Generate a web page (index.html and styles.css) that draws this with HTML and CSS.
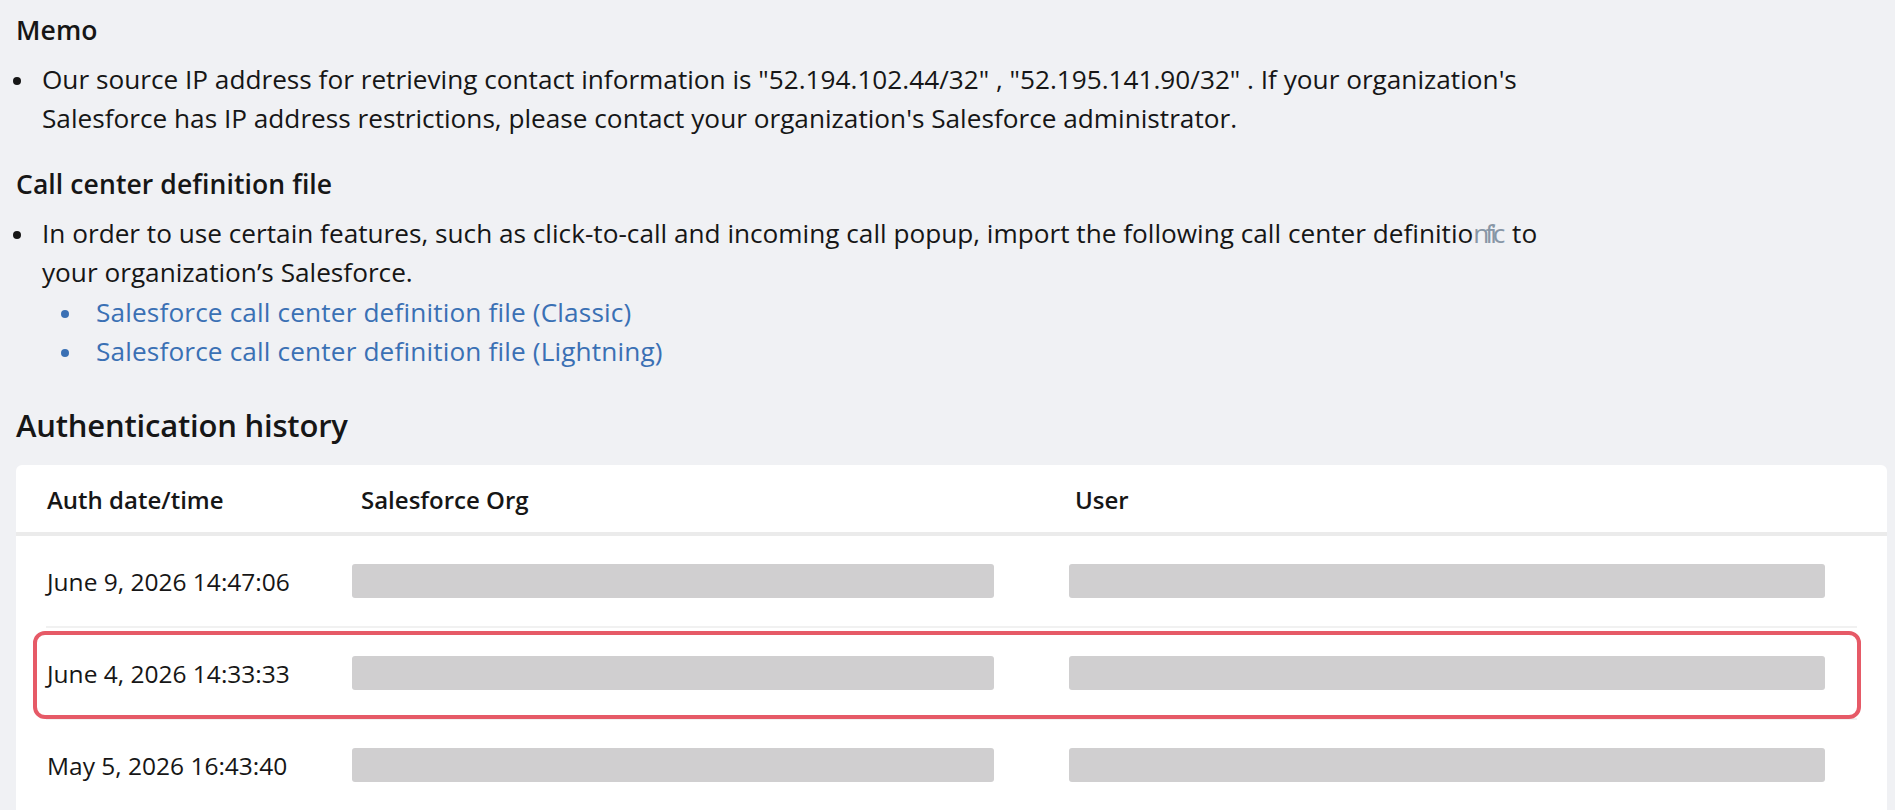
FILE: index.html
```html
<!DOCTYPE html>
<html lang="en">
<head>
<meta charset="UTF-8" />
<meta name="viewport" content="width=device-width, initial-scale=1" />
<title>Salesforce integration</title>
<link rel="stylesheet" href="styles.css">
</head>
<body>
  <main class="page">
    <h2 class="note-title">Memo</h2>
    <ul class="note-list">
      <li>Our source IP address for retrieving contact information is "52.194.102.44/32" , "52.195.141.90/32" . If your organization's<br>Salesforce has IP address restrictions, please contact your organization's Salesforce administrator.</li>
    </ul>

    <h2 class="note-title">Call center definition file</h2>
    <ul class="note-list">
      <li>In order to use certain features, such as click-to-call and incoming call popup, import the following call center definitio<span class="ghost">nfic</span> to<br>your organization’s Salesforce.
        <ul class="link-list">
          <li><a href="#">Salesforce call center definition file (Classic)</a></li>
          <li><a href="#">Salesforce call center definition file (Lightning)</a></li>
        </ul>
      </li>
    </ul>

    <h1 class="section-title">Authentication history</h1>
    <div class="card">
      <div class="table-head">
        <div class="cols">
          <div>Auth date/time</div>
          <div>Salesforce Org</div>
          <div>User</div>
        </div>
      </div>
      <div class="table-body">
        <div class="cols row">
          <div>June 9, 2026 14:47:06</div>
          <div><span class="mask mask-org"></span></div>
          <div><span class="mask mask-user"></span></div>
        </div>
        <div class="cols row marked">
          <div>June 4, 2026 14:33:33</div>
          <div><span class="mask mask-org"></span></div>
          <div><span class="mask mask-user"></span></div>
        </div>
        <div class="cols row">
          <div>May 5, 2026 16:43:40</div>
          <div><span class="mask mask-org"></span></div>
          <div><span class="mask mask-user"></span></div>
        </div>
      </div>
    </div>
  </main>
</body>
</html>
```

FILE: styles.css
```css
body { margin: 0; background: #f0f1f4; color: #161616; font-family: "Open Sans", "Noto Sans", sans-serif; font-size: 26.2px; line-height: 39px; }
.page { padding: 11px 8px 0 16px; }

.note-title { margin: 0; font-size: 26.5px; font-weight: 600; line-height: 39px; letter-spacing: 0.1px; }
.note-list { margin: 10px 0 27px; padding: 0 0 0 20px; white-space: nowrap; }
.note-list > li { list-style: disc; padding-left: 6px; }
.note-list li::marker { font-size: 22px; }
.ghost { color: #8796a6; letter-spacing: -4px; margin-right: 4px; }

.link-list { margin: 1px 0 0; padding: 0 0 0 42px; }
.link-list li { list-style: disc; color: #3a70b4; padding-left: 12px; }
.link-list a { color: #3a70b4; text-decoration: none; letter-spacing: 0.15px; }

.section-title { margin: 34px 0 20px; font-size: 31px; font-weight: 600; line-height: 40px; letter-spacing: -0.2px; }

.card { background: #fff; border-radius: 6px; width: 1871px; height: 360px; }
.cols { display: grid; grid-template-columns: 314px 714px 1fr; align-items: center; }
.table-head { border-bottom: 4px solid #ebebeb; padding: 20px 30px 17px; font-weight: 600; font-size: 24px; line-height: 30px; }
.table-head .cols div { padding-left: 1px; }
.table-body { padding: 0 30px; }
.row { position: relative; height: 90px; border-bottom: 2px solid #f1f1f1; font-size: 24.5px; }
.row > div:first-child { padding-left: 1px; }

.mask { display: block; height: 34px; margin-left: -8px; background: #d0cfd0; border-radius: 3px; }
.mask-org { width: 642px; }
.mask-user { width: 756px; margin-left: -5px; }

/* annotation around the second entry */
.marked::after { content: ""; position: absolute; top: 3px; bottom: -1px; left: -13px; right: -4px; border: 4px solid #e65a67; border-radius: 12px; }
```
